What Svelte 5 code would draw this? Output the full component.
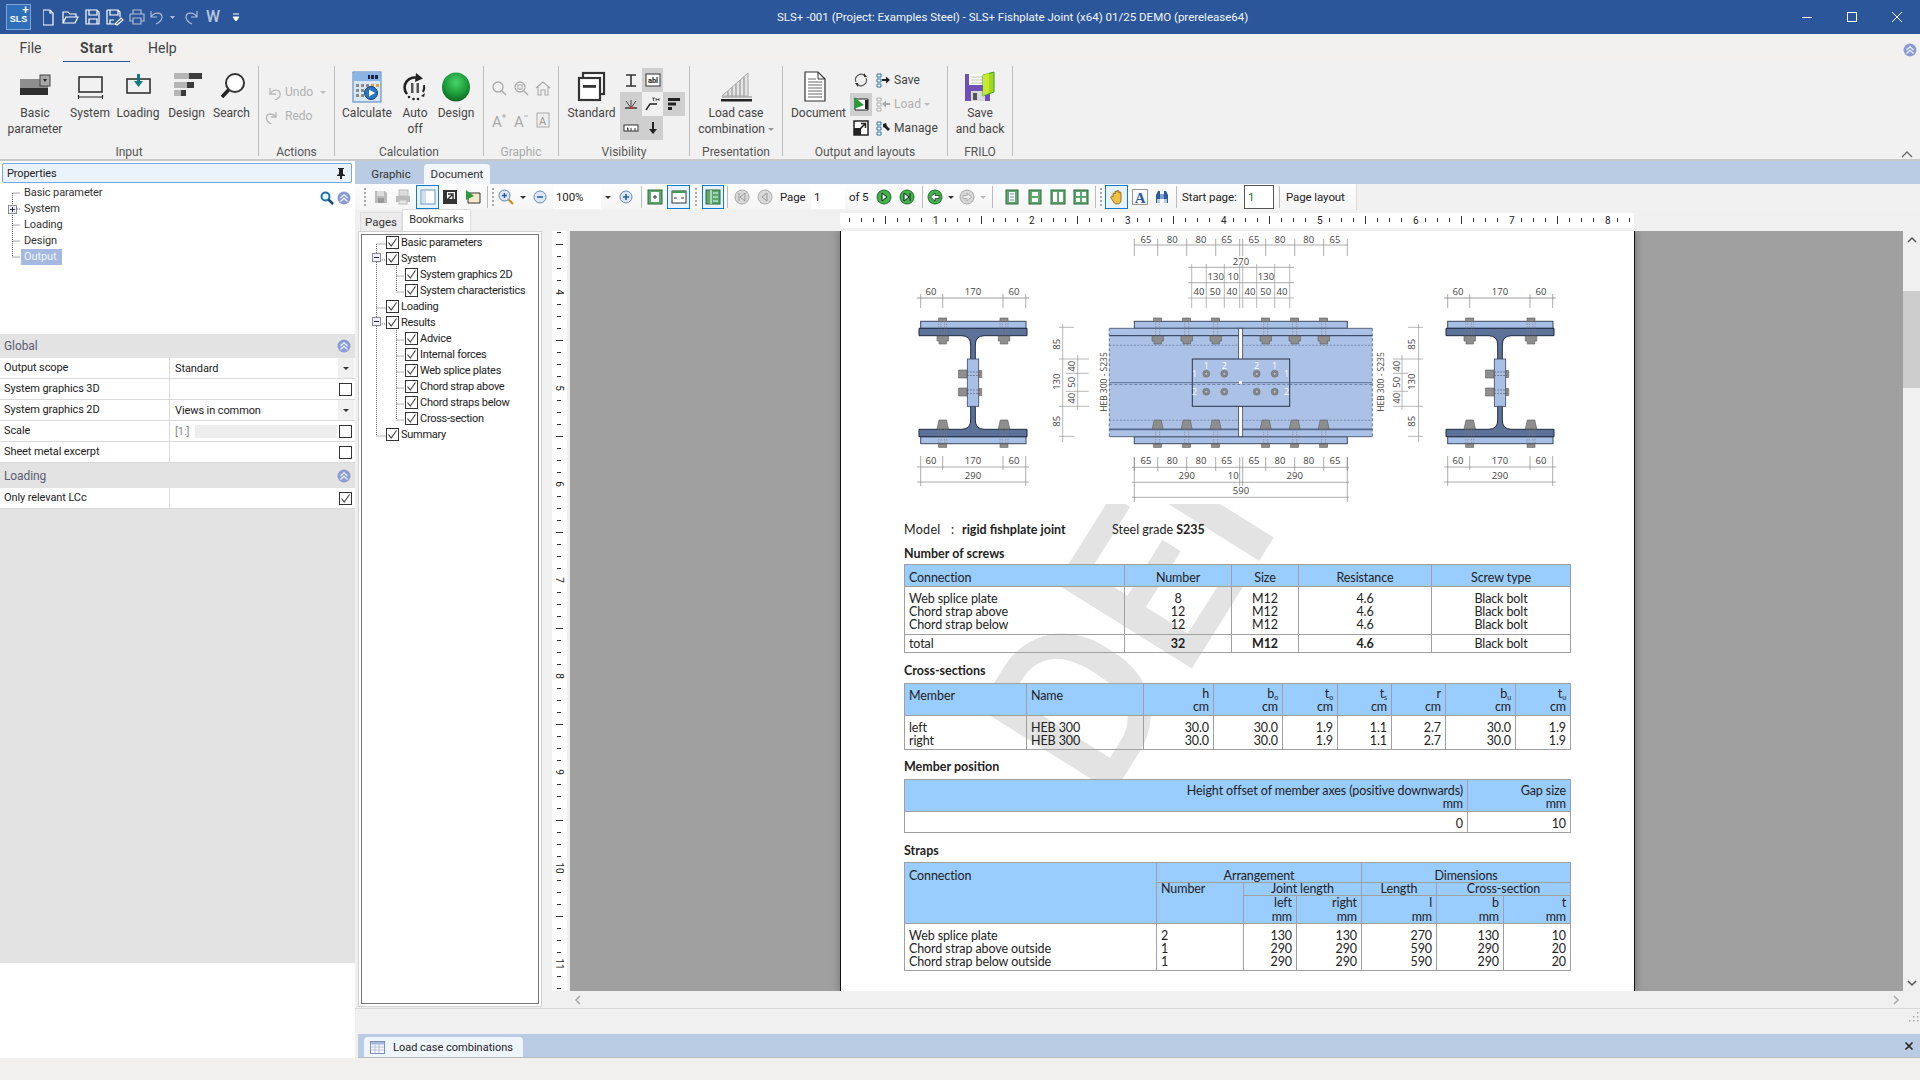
<script>
	const ic = {
		basic: '<rect x="1" y="8" width="28" height="9" fill="#8e8e8e"/><rect x="1" y="17" width="28" height="7" fill="#2e2e2e"/><rect x="21" y="4" width="10" height="11" fill="#a8a8a8" stroke="#444"/><path d="M24 8h4l-2 3z" fill="#222"/>',
		system: '<rect x="5" y="6" width="23" height="15" fill="none" stroke="#333" stroke-width="1.6"/><path d="M4 26h25M4.500 24v4M28.500 24v4" stroke="#222" stroke-width="1.2"/>',
		loading: '<rect x="5" y="8" width="23" height="14" fill="none" stroke="#333" stroke-width="1.6"/><path d="M15 3h3v7h3l-4.500 6-4.500-6h3z" fill="#117a80"/>',
		design: '<rect x="3" y="2" width="28" height="6" fill="#3c3c3c"/><rect x="3" y="2" width="15" height="6" fill="#b5b5b5"/><rect x="3" y="11" width="20" height="6" fill="#3c3c3c"/><rect x="3" y="11" width="13" height="6" fill="#b5b5b5"/><rect x="3" y="19" width="12" height="6" fill="#3c3c3c"/><rect x="3" y="19" width="7" height="6" fill="#b5b5b5"/>',
		search: '<circle cx="19" cy="12" r="9" fill="#fff" stroke="#333" stroke-width="2"/><path d="M12.500 19 6 26" stroke="#222" stroke-width="3.500"/>',
		calc: '<rect x="2" y="1" width="28" height="30" fill="#d8e6f6" stroke="#4d80c0"/><rect x="3" y="2" width="26" height="8" fill="#8ab4e6"/><g fill="#224"><rect x="17" y="4" width="2" height="4"/><rect x="20" y="4" width="3" height="4"/><rect x="24" y="4" width="3" height="4"/></g><g fill="#8a8a8a"><rect x="5" y="13" width="3" height="3"/><rect x="10" y="13" width="3" height="3"/><rect x="15" y="13" width="3" height="3"/><rect x="5" y="18" width="3" height="3"/><rect x="10" y="18" width="3" height="3"/><rect x="5" y="23" width="3" height="3"/><rect x="10" y="23" width="3" height="3"/></g><g fill="#e0a040"><rect x="20" y="13" width="3" height="3"/><rect x="25" y="13" width="3" height="3"/></g><circle cx="20" cy="22" r="6.500" fill="#2a76c0" stroke="#0d3f7c"/><path d="M18 18.500 24 22l-6 3.500z" fill="#fff"/>',
		auto: '<path d="M8 23A10 10 0 0 1 20 7.500" fill="none" stroke="#222" stroke-width="2.600"/><path d="M17 2l7 5.500-8 3.500z" fill="#222"/><path d="M25 14a10 10 0 0 1-1 7" fill="none" stroke="#222" stroke-width="2"/><rect x="12" y="12" width="2.500" height="10" fill="#555"/><rect x="17.500" y="12" width="2.500" height="10" fill="#555"/><g fill="#222"><circle cx="10" cy="26" r="1.300"/><circle cx="14.500" cy="28" r="1.300"/><circle cx="19" cy="28" r="1.300"/><path d="M22 25l4-3-1 4z"/></g>',
		sphere: '<ellipse cx="16" cy="16" rx="14" ry="14.500" fill="url(#sph)"/>',
		standard: '<rect x="7" y="2" width="21" height="21" fill="#fff" stroke="#333" stroke-width="2.200"/><rect x="3" y="7" width="21" height="22" fill="#fff" stroke="#333" stroke-width="2.200"/><rect x="7" y="14" width="13" height="2.800" fill="#333"/>',
		loadcase: '<path d="M2 25 28 2v23z" fill="#e4e4e4" stroke="#aaa"/><path d="M8 20v6M12 16v10M16 13v13M20 9v17M24 6v20" stroke="#999" stroke-width="1.200"/><path d="M2 26h30" stroke="#aaa" stroke-width="1.500"/><rect x="1" y="28" width="31" height="2.500" fill="#222"/>',
		doc: '<path d="M2 1h13l7 7v22H2z" fill="#fff" stroke="#333" stroke-width="1.200"/><path d="M15 1v7h7" fill="none" stroke="#333"/><path d="M5 8h8M5 11h14M5 14h14M5 17h14M5 20h14M5 23h14M5 26h14" stroke="#666"/>',
		saveback: '<path d="M1 3h22l3 3v24H1z" fill="#6f4fb8"/><rect x="5" y="3" width="16" height="11" fill="#fff"/><path d="M7 6h12M7 9h12M7 12h12" stroke="#bbb"/><rect x="7" y="20" width="14" height="10" fill="#d8d8d8"/><rect x="9" y="22" width="4" height="7" fill="#555"/><path d="M19 4l11-3v20l-11 4z" fill="#9fd81e" stroke="#3a9b22"/><path d="M19 4l6-2v20l-6 3z" fill="#c4ea30"/>',
		undo: '<path d="M5 4v6h6" fill="none" stroke="#b8b8b8" stroke-width="1.300"/><path d="M5 10c3-5 9-5 10-1 1 3-2 6-5 7" fill="none" stroke="#b8b8b8" stroke-width="1.300"/>',
		redo: '<path d="M11 4v5H6" fill="none" stroke="#b8b8b8" stroke-width="1.300"/><path d="M11 9C8 5 2 5 1.500 9c-.5 3 2 6 5 7" fill="none" stroke="#b8b8b8" stroke-width="1.300"/>',
		gzoom: '<circle cx="7" cy="7" r="5" fill="none" stroke="#aaa" stroke-width="1.300"/><path d="M11 11l4 4" stroke="#aaa" stroke-width="1.500"/>',
		gzoom2: '<circle cx="7" cy="7" r="5" fill="none" stroke="#aaa" stroke-width="1.300"/><rect x="5" y="5" width="4" height="4" fill="none" stroke="#aaa"/><path d="M11 11l4 4" stroke="#aaa" stroke-width="1.500"/>',
		ghome: '<path d="M1 8l7-6 7 6M3 7v8h3v-5h4v5h3V7" fill="none" stroke="#aaa" stroke-width="1.100"/>',
		ga1: '<text x="1" y="15" font-size="15" font-family="Roboto" fill="#aaa">A</text><path d="M11 4h4M13 2v4" stroke="#aaa"/>',
		ga2: '<text x="1" y="15" font-size="15" font-family="Roboto" fill="#aaa">A</text><path d="M11 4h4" stroke="#aaa"/>',
		ga3: '<rect x="2" y="1" width="12" height="14" fill="#eee" stroke="#aaa"/><text x="4" y="13" font-size="11" font-family="Roboto" fill="#999">A</text>',
		vI: '<path d="M3 3h10M3 14h10M8 3v11" stroke="#333" stroke-width="1.600"/>',
		vabl: '<rect x="1" y="2" width="14" height="12" fill="#fff" stroke="#333"/><text x="8" y="11" text-anchor="middle" font-size="7.500" font-weight="700" font-family="Roboto" fill="#222">abl</text>',
		vaxes: '<path d="M2 12h12" stroke="#333" stroke-width="1.400"/><path d="M8 12 3 5M8 12l5-7M8 12V4" stroke="#444"/><rect x="7" y="10.500" width="2.500" height="2.500" fill="#c33"/>',
		vth: '<path d="M1 14l4-6h7" fill="none" stroke="#222" stroke-width="1.400"/><path d="M7 2h3M8.500 2v3M11 2v3M14 2v3M11 3.500h3" stroke="#222" stroke-width=".7"/>',
		vbars: '<rect x="2" y="2" width="12" height="3" fill="#222"/><rect x="2" y="6.500" width="8" height="3" fill="#222"/><rect x="2" y="11" width="4" height="3" fill="#222"/>',
		vdim: '<rect x="1" y="5" width="14" height="6" fill="#fff" stroke="#333"/><path d="M4 8h1v3M8 8v3M12 8v3" stroke="#333"/>',
		varrow: '<path d="M8 2v8" stroke="#222" stroke-width="2"/><path d="M4 9h8l-4 5z" fill="#222"/>',
		orefresh: '<path d="M3 10a5.500 5.500 0 0 1 9-6M13 6a5.500 5.500 0 0 1-9 6" fill="none" stroke="#555" stroke-width="1.100"/><path d="M11 1v4h3zM5 15v-4H2z" fill="#333"/>',
		osave: '<path d="M2 2h4v3H2zM2 7h4v3H2zM2 12h4v3H2z" fill="#fff" stroke="#2b6ea8"/><path d="M7 8h5" stroke="#222" stroke-width="2"/><path d="M11 4.500 15 8l-4 3.500z" fill="#222"/>',
		oload: '<path d="M2 2h4v3H2zM2 7h4v3H2zM2 12h4v3H2z" fill="#fff" stroke="#aaa"/><path d="M10 8h5" stroke="#aaa" stroke-width="2"/><path d="M11 4.500 7 8l4 3.500z" fill="#aaa"/>',
		ofilm: '<path d="M2 3h13v11H2z" fill="#fff" stroke="#222"/><path d="M1 1v12l10-4z" fill="#2b9a3b"/><rect x="12" y="4" width="3" height="9" fill="#222"/>',
		oexpand: '<rect x="1" y="1" width="14" height="14" fill="#fff" stroke="#222" stroke-width="1.500"/><path d="M1 8h7v7H1z" fill="#222"/><path d="M7 9l5-5M8 3.500h4.500V8" fill="none" stroke="#222" stroke-width="1.500"/>',
		omanage: '<path d="M2 2h4v3H2zM2 7h4v3H2zM2 12h4v3H2z" fill="#fff" stroke="#2b6ea8"/><path d="M8 4l3-1 1 3 3 3-2 2-3-3-2-1z" fill="#222"/>',
		tSave: '<path d="M2 2h10l2 2v10H2z" fill="#bbb"/><rect x="4" y="2" width="7" height="5" fill="#ddd"/><rect x="5" y="9" width="6" height="5" fill="#999"/>',
		tPrint: '<rect x="4" y="1" width="9" height="6" fill="#ddd" stroke="#bbb"/><path d="M1 7h14v6H1z" fill="#bbb"/><rect x="4" y="11" width="8" height="4" fill="#e4e4e4" stroke="#bbb"/>',
		tPanel: '<rect x="1" y="1" width="14" height="14" fill="#fff" stroke="#6a8fc0"/><rect x="2" y="2" width="4" height="12" fill="#cfe0f5"/>',
		tExport: '<rect x="1" y="1" width="14" height="14" fill="#333"/><rect x="5" y="3" width="8" height="7" fill="#fff"/><path d="M3 13l7-7M6 5h5v5" fill="none" stroke="#333" stroke-width="1.500"/>',
		tFilm: '<path d="M3 4h12v10H3z" fill="#f6e9cc" stroke="#333"/><path d="M1 1v10l8-4z" fill="#2b9a3b"/>',
		tZoomIn: '<circle cx="6.500" cy="6.500" r="5.500" fill="#dbe7f7" stroke="#5880b0"/><path d="M4 6.500h5M6.500 4v5" stroke="#255da0" stroke-width="1.400"/><path d="M10.500 10.500 15 15" stroke="#c09020" stroke-width="2.200"/>',
		tMinus: '<circle cx="8" cy="8" r="6" fill="#dbe7f7" stroke="#6a8ab0"/><path d="M5 8h6" stroke="#255da0" stroke-width="1.500"/>',
		tPlus: '<circle cx="8" cy="8" r="6" fill="#dbe7f7" stroke="#6a8ab0"/><path d="M5 8h6M8 5v6" stroke="#255da0" stroke-width="1.500"/>',
		tFit: '<rect x="1" y="1" width="14" height="14" fill="#5ea86e" stroke="#2c6a3c"/><rect x="4" y="3" width="8" height="10" fill="#fff"/><path d="M6 8h4M8 6v4" stroke="#333"/>',
		tWidth: '<rect x="1" y="2" width="14" height="12" fill="#fff" stroke="#333"/><rect x="1" y="2" width="14" height="2" fill="#3f9a55"/><path d="M3 9h3M10 9h3" stroke="#333"/>',
		tBook: '<rect x="1" y="1" width="14" height="14" fill="#5ea86e" stroke="#2c6a3c"/><path d="M6 1v14" stroke="#fff"/><path d="M8 4h5M8 8h5M8 12h5" stroke="#dff"/>',
		pFirst: '<circle cx="8" cy="8" r="7" fill="#d8d8d8" stroke="#aaa"/><path d="M5 4v8M11 4l-5 4 5 4z" fill="none" stroke="#999"/>',
		pPrev: '<circle cx="8" cy="8" r="7" fill="#d8d8d8" stroke="#aaa"/><path d="M10 4 5 8l5 4z" fill="none" stroke="#999"/>',
		pNext: '<circle cx="8" cy="8" r="7" fill="#43b04a" stroke="#1d6f2c"/><path d="M6 4l5 4-5 4z" fill="#d9f4d0" stroke="#123"/>',
		pLast: '<circle cx="8" cy="8" r="7" fill="#43b04a" stroke="#1d6f2c"/><path d="M5 4l5 4-5 4zM11 4v8" fill="#d9f4d0" stroke="#123"/>',
		pBack: '<circle cx="8" cy="8" r="7" fill="#43b04a" stroke="#1d6f2c"/><path d="M3.500 8 8 4v2.500h4v3H8V12z" fill="#fff" stroke="#123" stroke-width=".7"/>',
		pFwd: '<circle cx="8" cy="8" r="7" fill="#d8d8d8" stroke="#aaa"/><path d="M12.500 8 8 4v2.500H4v3h4V12z" fill="#eee" stroke="#aaa"/>',
		l1: '<rect x="2" y="1" width="12" height="14" fill="#5ea86e" stroke="#2c6a3c"/><rect x="5" y="3" width="6" height="10" fill="#fff"/><path d="M6 5h4M6 8h4M6 11h4" stroke="#68a"/>',
		l2: '<rect x="2" y="1" width="12" height="14" fill="#5ea86e" stroke="#2c6a3c"/><rect x="5" y="3" width="6" height="4" fill="#fff"/><rect x="5" y="9" width="6" height="4" fill="#fff"/>',
		l3: '<rect x="1" y="1" width="14" height="14" fill="#5ea86e" stroke="#2c6a3c"/><rect x="3" y="3" width="4" height="10" fill="#fff"/><rect x="9" y="3" width="4" height="10" fill="#fff"/>',
		l4: '<rect x="1" y="1" width="14" height="14" fill="#5ea86e" stroke="#2c6a3c"/><rect x="3" y="3" width="4" height="4" fill="#fff"/><rect x="9" y="3" width="4" height="4" fill="#fff"/><rect x="3" y="9" width="4" height="4" fill="#fff"/><rect x="9" y="9" width="4" height="4" fill="#fff"/>',
		tHand: '<path d="M4 8V5c0-1.500 2-1.500 2 0V3c0-1.500 2-1.500 2 0v-.5c0-1.500 2-1.500 2 0V4c0-1.500 2-1.500 2 0v7c0 3-2 4-4 4s-3-1-4-3L2 9c-1-1.500 1-2.500 2-1z" fill="#f0c040" stroke="#80581a" stroke-width=".8"/>',
		tA: '<rect x=".5" y=".5" width="15" height="15" fill="none" stroke="#333" stroke-dasharray="1 1"/><text x="8" y="14" text-anchor="middle" font-size="15" font-family="Liberation Serif" fill="#2b5c9a" font-weight="700">A</text>',
		tBin: '<path d="M2 14V6l2-4h2v12zM10 14V2h2l2 4v8z" fill="#2b5c9a"/><rect x="6" y="5" width="4" height="5" fill="#79a0d0"/><rect x="3" y="10" width="3" height="4" fill="#bcd"/><rect x="10" y="10" width="3" height="4" fill="#bcd"/>'
	};

	const inputBtns = [
		{ w: 70, n: 'basic', s: 32, t: ['Basic', 'parameter'] },
		{ w: 40, n: 'system', s: 32, t: ['System'] },
		{ w: 56, n: 'loading', s: 32, t: ['Loading'] },
		{ w: 41, n: 'design', s: 32, t: ['Design'] },
		{ w: 49, n: 'search', s: 32, t: ['Search'] }
	];
	const calcBtns = [
		{ w: 64, n: 'calc', s: 32, t: ['Calculate'] },
		{ w: 32, n: 'auto', s: 32, t: ['Auto', 'off'] },
		{ w: 50, n: 'sphere', s: 32, t: ['Design'] }
	];
	const graphic = ['gzoom', 'gzoom2', 'ghome', 'ga1', 'ga2', 'ga3'];
	const visGrid = [
		{ n: 'vI' }, { n: 'vabl', on: true }, {},
		{ n: 'vaxes', on: true }, { n: 'vth' }, { n: 'vbars', on: true },
		{ n: 'vdim', on: true }, { n: 'varrow', on: true }, {}
	];
	const outRows = [
		{ a: 'orefresh', b: 'osave', t: 'Save' },
		{ a: 'ofilm', b: 'oload', t: 'Load', off: true, on: true },
		{ a: 'oexpand', b: 'omanage', t: 'Manage' }
	];

	const tools = [
		{ k: 'grip', w: 10 }, { k: 'ic', w: 22, n: 'tSave' }, { k: 'ic', w: 22, n: 'tPrint' }, { k: 'sp', w: 2 },
		{ k: 'ic', w: 23, n: 'tPanel', sel: true }, { k: 'ic', w: 22, n: 'tExport' }, { k: 'ic', w: 23, n: 'tFilm' },
		{ k: 'sep', w: 6 }, { k: 'grip', w: 6 }, { k: 'ic', w: 20, n: 'tZoomIn' }, { k: 'drop', w: 14 }, { k: 'ic', w: 20, n: 'tMinus' },
		{ k: 'sp', w: 3 }, { k: 'inp', w: 48, t: '100%' }, { k: 'drop', w: 14 }, { k: 'ic', w: 22, n: 'tPlus' },
		{ k: 'sep', w: 8 }, { k: 'ic', w: 20, n: 'tFit' }, { k: 'sp', w: 2 }, { k: 'ic', w: 23, n: 'tWidth', sel: true },
		{ k: 'grip', w: 12 }, { k: 'ic', w: 22, n: 'tBook', sel: true }, { k: 'sep', w: 7 },
		{ k: 'ic', w: 22, n: 'pFirst' }, { k: 'ic', w: 24, n: 'pPrev' }, { k: 'sp', w: 3 }, { k: 'txt', w: 31, t: 'Page' },
		{ k: 'inp', w: 34, t: '1' }, { k: 'sp', w: 4 }, { k: 'txt', w: 21, t: 'of 5' }, { k: 'sp', w: 3 },
		{ k: 'ic', w: 22, n: 'pNext' }, { k: 'sp', w: 1 }, { k: 'ic', w: 22, n: 'pLast' }, { k: 'sep', w: 8 },
		{ k: 'ic', w: 18, n: 'pBack' }, { k: 'drop', w: 14 }, { k: 'ic', w: 18, n: 'pFwd' }, { k: 'drop', w: 14, off: true }, { k: 'sep', w: 4 }, { k: 'sp', w: 6 },
		{ k: 'ic', w: 23, n: 'l1' }, { k: 'ic', w: 23, n: 'l2' }, { k: 'ic', w: 24, n: 'l3' }, { k: 'ic', w: 22, n: 'l4' },
		{ k: 'sep', w: 6 }, { k: 'grip', w: 6 }, { k: 'sp', w: 1 }, { k: 'ic', w: 23, n: 'tHand', sel: true },
		{ k: 'ic', w: 23, n: 'tA' }, { k: 'ic', w: 22, n: 'tBin' }, { k: 'sep', w: 7 }, { k: 'sp', w: 2 },
		{ k: 'txt', w: 58, t: 'Start page:' }, { k: 'sp', w: 4 }, { k: 'box', w: 30, t: '1' }, { k: 'sep', w: 10 }, { k: 'sp', w: 2 },
		{ k: 'txt', w: 62, t: 'Page layout' }
	];

	const propTree = ['Basic parameter', 'System', 'Loading', 'Design', 'Output'];
	const globalRows = [
		{ l: 'Output scope', v: 'Standard', dd: true },
		{ l: 'System graphics 3D', cb: 'off' },
		{ l: 'System graphics 2D', v: 'Views in common', dd: true },
		{ l: 'Scale', v: '[1:]', scale: true, cb: 'off' },
		{ l: 'Sheet metal excerpt', cb: 'off' }
	];

	const marks = [
		['Basic parameters', 1], ['System', 1, 'm'], ['System graphics 2D', 2], ['System characteristics', 2], ['Loading', 1],
		['Results', 1, 'm'], ['Advice', 2], ['Internal forces', 2], ['Web splice plates', 2], ['Chord strap above', 2],
		['Chord straps below', 2], ['Cross-section', 2], ['Summary', 1]
	];

	const hTicks = Array.from({ length: 67 }, (_, i) => i);
	const vTicks = Array.from({ length: 64 }, (_, i) => i);

	const t1cols = [220, 107, 67, 133, 139];
	const t1rows = [
		['Web splice plate', '8', 'M12', '4.6', 'Black bolt'],
		['Chord strap above', '12', 'M12', '4.6', 'Black bolt'],
		['Chord strap below', '12', 'M12', '4.6', 'Black bolt']
	];
	const t2cols = [122, 117, 70, 69, 55, 54, 54, 70, 55];
	const t2rows = [
		['left', 'HEB 300', '30.0', '30.0', '1.9', '1.1', '2.7', '30.0', '1.9'],
		['right', 'HEB 300', '30.0', '30.0', '1.9', '1.1', '2.7', '30.0', '1.9']
	];
	const t4cols = [252, 87, 53, 65, 75, 67, 67];
	const t4rows = [
		['Web splice plate', '2', '130', '130', '270', '130', '10'],
		['Chord strap above outside', '1', '290', '290', '590', '290', '20'],
		['Chord strap below outside', '1', '290', '290', '590', '290', '20']
	];

	// diagram data, all in screen pixels of the reference
	const flangeBolts = [1157.7, 1186.7, 1215.7, 1265.7, 1294.7, 1323.7];
	const webBolts = [1206.3, 1224.3, 1256.7, 1274.7];
	const topA = [[65, 1146], [80, 1172.3], [80, 1201], [65, 1226.7], [65, 1254], [80, 1280], [80, 1308.7], [65, 1335]];
	const ticksA = [1134.3, 1157.7, 1186.7, 1215.7, 1239.7, 1242.7, 1265.7, 1294.7, 1323.7, 1347.3];
	const ticksC = [1191.7, 1206.3, 1224.3, 1239.7, 1242.7, 1256.7, 1274.7, 1289.7];
	const topC = [[40, 1199], [50, 1215.3], [40, 1232], [40, 1250], [50, 1265.7], [40, 1282]];
	const rotL = [[85, 345.3], [130, 382.7], [85, 422.3]];
	const rotS = [[40, 367.3], [50, 383.3], [40, 399.3]];
</script>

{#snippet svgIcon(name, size)}
	<svg class="icon" width={size} height={size} viewBox={size === 32 ? '0 0 32 32' : '0 0 16 16'}>{@html ic[name]}</svg>
{/snippet}

{#snippet bigBtn(b)}
	<div class="big" style:width="{b.w}px">
		<div class="big-ic">{@render svgIcon(b.n, b.s)}</div>
		{#each b.t as line}<span>{line}</span>{/each}
	</div>
{/snippet}

{#snippet circleUp()}
	<svg width="14" height="14" viewBox="0 0 14 14"><circle cx="7" cy="7" r="6.500" fill="#8d9bd3"/><path d="M3.500 7 7 3.800 10.500 7M3.500 10.500 7 7.300l3.500 3.200" fill="none" stroke="#eaf4ff" stroke-width="1.300"/></svg>
{/snippet}

{#snippet check(on)}
	<svg width="13" height="13" viewBox="0 0 13 13"><rect x=".5" y=".5" width="12" height="12" fill="#fff" stroke="#333"/>{#if on}<path d="M2.500 6.500 5.200 10 10.500 2.500" fill="none" stroke="#444" stroke-width="1.100"/>{/if}</svg>
{/snippet}

<div class="app">
	<header class="titlebar">
		<div class="logo">SLS<i>+</i></div>
		<div class="quick">
			<svg width="190" height="20" viewBox="0 0 190 20" fill="none" stroke="#fff" stroke-width="1.200">
				<path d="M0 3h7l3 3v12H0zM7 3v3h3" />
				<path d="M20 16V5h5l2 2h6v3M20 16l3-6h12l-3 6z" />
				<path d="M43 3h11l2 2v12H43zM46 3v5h8V3M46 17v-5h8v5" />
				<path d="M64 3h11l2 2v5M64 3v14h7M67 3v5h8V3M67 17v-4h4M72 17l6-6 2 2-6 5z" />
				<path d="M90 7V3h8v4M87 7h14v7h-3M90 14h-3V7M90 11h8v6h-8z" stroke="#aebbd6" />
				<path d="M108 4v6h6M108 10c3-5 10-5 11-1 1 3-3 7-6 8" stroke="#aebbd6" />
				<path d="M127 9h5l-2.500 3z" fill="#aebbd6" stroke="none" />
				<path d="M154 4v6h-6M154 10c-3-5-10-5-11-1-1 3 3 7 6 8" stroke="#aebbd6" />
			</svg>
			<span class="w">W</span>
			<svg class="custom" width="8" height="10" viewBox="0 0 8 10"><path d="M1 2h6M1 5h6l-3 4z" fill="#fff" stroke="#fff" /></svg>
		</div>
		<div class="title">SLS+ -001 (Project: Examples Steel) - SLS+ Fishplate Joint (x64) 01/25 DEMO (prerelease64)</div>
		<div class="winctl">
			<svg width="14" height="14" viewBox="0 0 14 14"><path d="M2 7.500h10" stroke="#fff" /></svg>
			<svg width="14" height="14" viewBox="0 0 14 14"><rect x="2.500" y="2.500" width="9" height="9" fill="none" stroke="#fff" /></svg>
			<svg width="14" height="14" viewBox="0 0 14 14"><path d="M2 2l10 10M12 2 2 12" stroke="#fff" /></svg>
		</div>
	</header>

	<nav class="rtabs">
		<span class="rtab file">File</span>
		<span class="rtab start">Start</span>
		<span class="rtab help">Help</span>
		<div class="help-ic">{@render circleUp()}</div>
	</nav>

	<section class="ribbon">
		<svg width="0" height="0" class="defs"><defs><radialGradient id="sph" cx=".5" cy=".35" r=".7"><stop offset="0" stop-color="#4bd36a"/><stop offset=".6" stop-color="#1b9a3a"/><stop offset="1" stop-color="#0a5a1f"/></radialGradient></defs></svg>
		<div class="group g-input">
			<div class="gbody">{#each inputBtns as b}{@render bigBtn(b)}{/each}</div>
			<div class="glabel">Input</div>
		</div>
		<div class="group g-actions">
			<div class="gbody col">
				<div class="srow off"><svg width="16" height="16" viewBox="0 0 16 16">{@html ic.undo}</svg><span>Undo</span><b class="caret"></b></div>
				<div class="srow off"><svg width="16" height="16" viewBox="0 0 16 16">{@html ic.redo}</svg><span>Redo</span></div>
			</div>
			<div class="glabel">Actions</div>
		</div>
		<div class="group g-calc">
			<div class="gbody">{#each calcBtns as b}{@render bigBtn(b)}{/each}</div>
			<div class="glabel">Calculation</div>
		</div>
		<div class="group g-graphic">
			<div class="gbody gridg">{#each graphic as g}<div class="cell">{@render svgIcon(g, 16)}</div>{/each}</div>
			<div class="glabel off">Graphic</div>
		</div>
		<div class="group g-vis">
			<div class="gbody">
				{@render bigBtn({ w: 65, n: 'standard', s: 32, t: ['Standard'] })}
				<div class="visgrid">
					{#each visGrid as v}
						<div class="vcell" class:on={v.on}>{#if v.n}{@render svgIcon(v.n, 16)}{/if}</div>
					{/each}
				</div>
			</div>
			<div class="glabel">Visibility</div>
		</div>
		<div class="group g-pres">
			<div class="gbody">
				<div class="big wide">
					<div class="big-ic">{@render svgIcon('loadcase', 32)}</div>
					<span>Load case</span><span>combination <b class="caret"></b></span>
				</div>
			</div>
			<div class="glabel">Presentation</div>
		</div>
		<div class="group g-out">
			<div class="gbody">
				{@render bigBtn({ w: 71, n: 'doc', s: 32, t: ['Document'] })}
				<div class="outrows">
					{#each outRows as r}
						<div class="orow" class:off={r.off}>
							<div class="oa" class:on={r.on}>{@render svgIcon(r.a, 16)}</div>
							{@render svgIcon(r.b, 16)}
							<span>{r.t}</span>{#if r.off}<b class="caret"></b>{/if}
						</div>
					{/each}
				</div>
			</div>
			<div class="glabel">Output and layouts</div>
		</div>
		<div class="group g-frilo">
			<div class="gbody">{@render bigBtn({ w: 64, n: 'saveback', s: 32, t: ['Save', 'and back'] })}</div>
			<div class="glabel">FRILO</div>
		</div>
		<svg class="collapse" width="12" height="8" viewBox="0 0 12 8"><path d="M1 7l5-5 5 5" fill="none" stroke="#666" stroke-width="1.300"/></svg>
	</section>

	<main class="main">
		<aside class="left">
			<div class="props"><span>Properties</span>
				<svg width="10" height="12" viewBox="0 0 10 12"><path d="M2 1h6v1H7v5l2 1v1H6v3H4V9H1V8l2-1V2H2z" fill="#222"/></svg>
			</div>
			<div class="ptree">
				<svg class="plines" width="24" height="80" viewBox="0 0 24 80" fill="none" stroke="#555" stroke-dasharray="1 1"><path d="M12.500 9v64M12.500 9h8M17 25h4M12.500 41h8M12.500 57h8M12.500 73h8"/></svg>
				<svg class="pplus" width="9" height="9" viewBox="0 0 9 9"><rect x=".5" y=".5" width="8" height="8" fill="#eef" stroke="#888"/><path d="M2 4.500h5M4.500 2v5" stroke="#224"/></svg>
				{#each propTree as p, i}
					<div class="pnode" class:sel={i === 4}>{p}</div>
				{/each}
				<div class="ptools">
					<svg width="14" height="14" viewBox="0 0 14 14"><circle cx="5.500" cy="5.500" r="4" fill="#dff" stroke="#1f6fb0" stroke-width="2"/><path d="M8.500 8.500 13 13" stroke="#174a7c" stroke-width="2.500"/></svg>
					{@render circleUp()}
				</div>
			</div>
			<div class="sect"><span>Global</span>{@render circleUp()}</div>
			{#each globalRows as r}
				<div class="prow">
					<div class="pl">{r.l}</div>
					<div class="pv" class:grayt={r.scale}>
						<span>{r.v ?? ''}</span>
						{#if r.scale}<div class="scalebox"></div>{/if}
						{#if r.dd}<div class="dd"><b class="caret dark"></b></div>{/if}
						{#if r.cb}<div class="cb">{@render check(false)}</div>{/if}
					</div>
				</div>
			{/each}
			<div class="sect tall"><span>Loading</span>{@render circleUp()}</div>
			<div class="prow">
				<div class="pl">Only relevant LCc</div>
				<div class="pv"><span></span><div class="cb">{@render check(true)}</div></div>
			</div>
			<div class="filler"></div>
		</aside>

		<div class="right">
			<div class="dtabs">
				<span class="dtab">Graphic</span>
				<span class="dtab act">Document</span>
			</div>
			<div class="toolrow">
				<div class="toolbar">
					{#each tools as t}
						<div class="tool {t.k}" class:sel={t.sel} style:width="{t.w}px">
							{#if t.k === 'ic'}{@render svgIcon(t.n, 16)}{/if}
							{#if t.k === 'txt' || t.k === 'inp' || t.k === 'box'}{t.t}{/if}
							{#if t.k === 'drop'}<b class="caret dark" class:light={t.off}></b>{/if}
						</div>
					{/each}
				</div>
			</div>
			<div class="work">
				<div class="marks">
					<div class="subtabs">
						<span class="stab">Pages</span>
						<span class="stab act">Bookmarks</span>
					</div>
					<div class="mframe">
						<div class="mtree">
							<svg class="mlines" width="60" height="210" viewBox="0 0 60 210" fill="none" stroke="#666" stroke-dasharray="1 1">
								<path d="M14.500 11v192M14.500 11h10M18 27h6M34.500 27v32M34.500 43h8M34.500 59h8M14.500 75h10M18 91h6M34.500 91v96M34.500 107h8M34.500 123h8M34.500 139h8M34.500 155h8M34.500 171h8M34.500 187h8M14.500 203h10"/>
							</svg>
							{#each marks as m}
								<div class="mrow" class:l2={m[1] === 2}>
									{#if m[2]}<svg class="minus" width="9" height="9" viewBox="0 0 9 9"><rect x=".5" y=".5" width="8" height="8" fill="#eef" stroke="#888"/><path d="M2 4.500h5" stroke="#224"/></svg>{/if}
									{@render check(true)}<span>{m[0]}</span>
								</div>
							{/each}
						</div>
					</div>
				</div>

				<div class="docview">
					<div class="hruler">
						<svg width="794" height="15" viewBox="0 0 794 15">
							{#each hTicks as i}
								{#if i % 8 === 0 && i > 0}
									<text x={i * 12 - 3} y="11" font-size="10" font-family="Roboto" fill="#222">{i / 8}</text>
								{:else}
									<path d="M{i * 12 - 2.500} {i % 4 === 0 ? 3 : 5}v{i % 4 === 0 ? 8 : 4}" stroke="#333"/>
								{/if}
							{/each}
						</svg>
					</div>
					<div class="docrow">
						<div class="vruler">
							<svg width="15" height="760" viewBox="0 0 15 760">
								{#each vTicks as i}
									{#if (i - 5) % 8 === 0 && i > 4}
										<text transform="translate(4 {i * 12 + 1}) rotate(90)" text-anchor="middle" font-size="10" font-family="Roboto" fill="#222">{(i - 5) / 8 + 4}</text>
									{:else}
										<path d="M{(i - 5) % 4 === 0 ? 4 : 5} {i * 12 + 1.500}h{(i - 5) % 4 === 0 ? 7 : 4}" stroke="#333"/>
									{/if}
								{/each}
							</svg>
						</div>
						<div class="viewer">
							<div class="page">
								<div class="stamp">DEMO</div>
								<svg class="drawing" width="794" height="273" viewBox="841 232 794 273" font-family="Open Sans, sans-serif" font-size="9.500" fill="#444">
									<defs>
										<g id="isec">
											<rect x="920.700" y="322.300" width="105.300" height="7" fill="#a9c0e6" stroke="#3a4660"/>
											<rect x="920.700" y="437.700" width="105.300" height="7" fill="#a9c0e6" stroke="#3a4660"/>
											<path d="M919 329.300H1027V336.700H984Q975.300 337 975.300 346V421Q975.300 430 984 430.300H1027V437.700H919V430.300H962Q970.700 430 970.700 421V346Q970.700 337 962 336.700H919Z" fill="#5d7299" stroke="#1f2a40"/>
											<rect x="967.300" y="360" width="11.400" height="47.300" fill="#a9c0e6" stroke="#3a4660" stroke-width=".8"/>
											<g id="bolt" fill="#8e8e8e" stroke="#5c5c5c" stroke-width=".6">
												<rect x="938.700" y="319" width="8" height="3.300"/>
												<path d="M937 337h11.500v5h-2v3h-7.500v-3h-2z"/>
												<path d="M938.700 322v15M941 322v15M944.500 322v15M946.700 322v15" stroke="#7a7a8c" stroke-dasharray="1.500 1" fill="none"/>
												<path d="M939 421l-2 9h11.500l-2-9z"/>
												<rect x="938.700" y="445" width="8" height="3.300"/>
												<path d="M938.700 430v15M941 430v15M944.500 430v15M946.700 430v15" stroke="#7a7a8c" stroke-dasharray="1.500 1" fill="none"/>
											</g>
											<use href="#bolt" x="61.300"/>
											<g fill="#8e8e8e" stroke="#5c5c5c" stroke-width=".6">
												<path d="M958.500 371h8.500v8h-8.500zM978.700 371.500h3v7h-3z"/>
												<path d="M958.500 389h8.500v8h-8.500zM978.700 389.500h3v7h-3z"/>
											</g>
											<path d="M967 373h13M967 376.500h13M967 391h13M967 394.500h13" stroke="#556" stroke-width=".6" stroke-dasharray="2 1"/>
										</g>
										<g id="idims">
											<path d="M917 299h112" stroke="#bbb" stroke-width="1.300"/>
											<path d="M920.700 295v14M942.700 295v14M1003 295v14M1025.700 295v14M917 468h112M917 483h112M920.700 457v30M942.700 457v14M1003 457v14M1025.700 457v30" stroke="#888" stroke-width=".7"/>
											<text x="931" y="295.500" text-anchor="middle">60</text>
											<text x="973" y="295.500" text-anchor="middle">170</text>
											<text x="1014" y="295.500" text-anchor="middle">60</text>
											<text x="931" y="465" text-anchor="middle">60</text>
											<text x="973" y="465" text-anchor="middle">170</text>
											<text x="1014" y="465" text-anchor="middle">60</text>
											<text x="973" y="480" text-anchor="middle">290</text>
										</g>
									</defs>
									<use href="#isec"/><use href="#idims"/>
									<use href="#isec" x="527"/><use href="#idims" x="527"/>

									<!-- fishplate side view -->
									<rect x="1134.300" y="322.300" width="213" height="7" fill="#a9c0e6" stroke="#3a4660"/>
									<rect x="1134.300" y="437.700" width="213" height="7" fill="#a9c0e6" stroke="#3a4660"/>
									<rect x="1109.300" y="329.300" width="263" height="108.400" fill="#abc1e6"/>
									<path d="M1109.300 329.300h263M1109.300 437.700h263" stroke="#3a4660" stroke-width=".8"/>
									<path d="M1109.300 329.300v108.400M1372.300 329.300v108.400" stroke="#4a5a80" stroke-width=".8" stroke-dasharray="3 2"/>
									<path d="M1109.300 336.700h263" stroke="#26324c"/>
									<path d="M1109.300 430.300h263" stroke="#56688c" stroke-width="1.700"/>
									<path d="M1109.300 346.300h263M1109.300 421.300h263" stroke="#5a6a90" stroke-width=".6" stroke-dasharray="2 1.500"/>
									<path d="M1109.300 383.700h263" stroke="#4a5a80" stroke-width=".8"/>
									<path d="M1109.300 385.500h263" stroke="#4a5a80" stroke-width=".6" stroke-dasharray="3 2"/>
									<rect x="1238.700" y="329.300" width="4" height="108.400" fill="#fff" stroke="#26324c" stroke-width=".7"/>
									<rect x="1192.300" y="360" width="97.400" height="47.300" fill="#abc1e6" stroke="#26324c"/>
									<path d="M1192.300 383.700h97.400" stroke="#4a5a80" stroke-width=".8"/>
									<path d="M1192.300 385.500h97.400" stroke="#4a5a80" stroke-width=".6" stroke-dasharray="3 2"/>
									<rect x="1239" y="382" width="3" height="3" fill="#fff"/>
									{#each flangeBolts as x}
										<g fill="#8e8e8e" stroke="#5c5c5c" stroke-width=".6">
											<rect x={x - 4} y="319" width="8" height="3.300"/>
											<path d="M{x - 5.700} 337h11.500v5h-2v3h-7.500v-3h-2z"/>
											<path d="M{x - 3.500} 421l-2 9h11l-2-9z"/>
											<rect x={x - 4} y="445" width="8" height="3.300"/>
											<path d="M{x - 2} 322v15M{x + 2} 322v15M{x - 2} 430v15M{x + 2} 430v15" stroke="#7a7a8c" stroke-dasharray="1.500 1" fill="none"/>
										</g>
									{/each}
									{#each webBolts as x}
										{#each [374.7, 392.7] as y}
											<circle cx={x} cy={y} r="3.500" fill="#8a8a8a" stroke="#666" stroke-width=".5"/>
											<circle cx={x} cy={y} r="1.500" fill="#b5c5de" stroke="#444" stroke-width=".4"/>
										{/each}
									{/each}
									<g fill="#fff" font-size="9" text-anchor="middle">
										<text x="1206.300" y="370">1</text><text x="1224.300" y="370">2</text><text x="1256.700" y="370">2</text><text x="1274.700" y="370">1</text>
										<text x="1194.700" y="378">1</text><text x="1194.700" y="396">2</text><text x="1286.700" y="378">1</text><text x="1286.700" y="396">2</text>
									</g>

									<!-- dimensions -->
									<path d="M1134 246h214M1132 468.300h217M1132 483.300h217M1132 498.300h217" stroke="#888" stroke-width=".7"/>
									<path d="M1188 268.300h106M1188 283.700h106M1188 299h106" stroke="#bbb" stroke-width="1.200"/>
									{#each ticksA as x}<path d="M{x} 240v17M{x} 458v14" stroke="#888" stroke-width=".7"/>{/each}
									<path d="M1134.300 458v45M1347.300 458v45M1239.700 472v15M1242.700 472v15" stroke="#888" stroke-width=".7"/>
									{#each ticksC as x}<path d="M{x} 265v44" stroke="#999" stroke-width=".7"/>{/each}
									{#each topA as [t, x]}
										<text x={x} y="243.500" text-anchor="middle">{t}</text>
										<text x={x} y="465" text-anchor="middle">{t}</text>
									{/each}
									<text x="1241" y="266" text-anchor="middle">270</text>
									<text x="1215.700" y="281" text-anchor="middle">130</text><text x="1233.300" y="281" text-anchor="middle">10</text><text x="1266" y="281" text-anchor="middle">130</text>
									{#each topC as [t, x]}<text x={x} y="296" text-anchor="middle">{t}</text>{/each}
									<text x="1186.700" y="480" text-anchor="middle">290</text><text x="1233.300" y="480" text-anchor="middle">10</text><text x="1294.700" y="480" text-anchor="middle">290</text>
									<text x="1241" y="495" text-anchor="middle">590</text>

									<!-- vertical dimensions either side -->
									<path d="M1062.700 325v118M1059 328.300h15M1059 360h30M1059 407.300h30M1059 437.300h15M1077.700 356v55M1065.700 374.300h23M1065.700 392.300h23" stroke="#999" stroke-width=".7"/>
									<path d="M1418.600 325v118M1408 328.300h15M1393 360h30M1393 407.300h30M1408 437.300h15M1402 356v55M1393 374.300h15M1393 392.300h15" stroke="#999" stroke-width=".7"/>
									{#each rotL as [t, y]}
										<text transform="translate(1060 {y}) rotate(-90)" text-anchor="middle">{t}</text>
										<text transform="translate(1415 {y}) rotate(-90)" text-anchor="middle">{t}</text>
									{/each}
									{#each rotS as [t, y]}
										<text transform="translate(1075 {y}) rotate(-90)" text-anchor="middle">{t}</text>
										<text transform="translate(1400 {y}) rotate(-90)" text-anchor="middle">{t}</text>
									{/each}
									<text transform="translate(1107 383) rotate(-90)" text-anchor="middle" font-size="8.500">HEB 300 - S235</text>
									<text transform="translate(1384 383) rotate(-90)" text-anchor="middle" font-size="8.500">HEB 300 - S235</text>
								</svg>

								<div class="report">
									<div class="model">
										<span class="m1">Model</span><span class="m2">:</span><b class="m3">rigid fishplate joint</b>
										<span>Steel grade <b>S235</b></span>
									</div>

									<h4 class="h1">Number of screws</h4>
									<table>
										<colgroup>{#each t1cols as w}<col style:width="{w}px">{/each}</colgroup>
										<thead><tr class="h22"><th class="tl">Connection</th><th>Number</th><th>Size</th><th>Resistance</th><th>Screw type</th></tr></thead>
										<tbody>
											{#each t1rows as r, i}
												<tr class:first={i === 0} class:last={i === 2}>
													{#each r as c, j}<td class:tc={j > 0}>{c}</td>{/each}
												</tr>
											{/each}
											<tr class="total"><td>total</td><td class="tc"><b>32</b></td><td class="tc"><b>M12</b></td><td class="tc"><b>4.6</b></td><td class="tc">Black bolt</td></tr>
										</tbody>
									</table>

									<h4 class="h2">Cross-sections</h4>
									<table>
										<colgroup>{#each t2cols as w}<col style:width="{w}px">{/each}</colgroup>
										<thead>
											<tr class="h33">
												<th class="tl top">Member</th><th class="tl top">Name</th>
												<th class="tr">h<br>cm</th><th class="tr">b<sub>o</sub><br>cm</th><th class="tr">t<sub>o</sub><br>cm</th><th class="tr">t<sub>s</sub><br>cm</th><th class="tr">r<br>cm</th><th class="tr">b<sub>u</sub><br>cm</th><th class="tr">t<sub>u</sub><br>cm</th>
											</tr>
										</thead>
										<tbody>
											{#each t2rows as r, i}
												<tr class:first={i === 0} class:last={i === 1}>
													{#each r as c, j}<td class:tr={j > 1}>{c}</td>{/each}
												</tr>
											{/each}
										</tbody>
									</table>

									<h4 class="h3">Member position</h4>
									<table>
										<colgroup><col style:width="563px"><col style:width="103px"></colgroup>
										<thead><tr class="h33"><th class="tr">Height offset of member axes (positive downwards)<br>mm</th><th class="tr">Gap size<br>mm</th></tr></thead>
										<tbody><tr class="single"><td class="tr">0</td><td class="tr">10</td></tr></tbody>
									</table>

									<h4 class="h4">Straps</h4>
									<table>
										<colgroup>{#each t4cols as w}<col style:width="{w}px">{/each}</colgroup>
										<thead>
											<tr class="s1">
												<th class="tl" rowspan="4">Connection</th>
												<th colspan="3">Arrangement</th>
												<th colspan="3">Dimensions</th>
											</tr>
											<tr class="s2">
												<th class="tl top0" rowspan="3">Number</th>
												<th colspan="2">Joint length</th>
												<th class="nb">Length</th>
												<th colspan="2">Cross-section</th>
											</tr>
											<tr class="s3"><th class="tr nb nr">left</th><th class="tr nb">right</th><th class="tr nb">l</th><th class="tr nb">b</th><th class="tr nb">t</th></tr>
											<tr class="s4"><th class="tr nt nr">mm</th><th class="tr nt">mm</th><th class="tr nt">mm</th><th class="tr nt">mm</th><th class="tr nt">mm</th></tr>
										</thead>
										<tbody>
											{#each t4rows as r, i}
												<tr class:first={i === 0} class:last={i === 2}>
													{#each r as c, j}<td class:tr={j > 1}>{c}</td>{/each}
												</tr>
											{/each}
										</tbody>
									</table>
								</div>
							</div>
						</div>
						<div class="vscroll">
							<svg width="10" height="8" viewBox="0 0 10 8"><path d="M1 6l4-4 4 4" fill="none" stroke="#555" stroke-width="1.500"/></svg>
							<div class="thumb"></div>
							<svg width="10" height="8" viewBox="0 0 10 8"><path d="M1 2l4 4 4-4" fill="none" stroke="#555" stroke-width="1.500"/></svg>
						</div>
					</div>
					<div class="hscroll">
						<svg width="8" height="10" viewBox="0 0 8 10"><path d="M6 1 2 5l4 4" fill="none" stroke="#aaa" stroke-width="1.500"/></svg>
						<svg width="8" height="10" viewBox="0 0 8 10"><path d="M2 1l4 4-4 4" fill="none" stroke="#aaa" stroke-width="1.500"/></svg>
					</div>
				</div>
			</div>
			<div class="gapbar">
				<svg width="10" height="10" viewBox="0 0 10 10" fill="#aaa"><rect x="8" y="0" width="1.500" height="1.500"/><rect x="8" y="4" width="1.500" height="1.500"/><rect x="4" y="4" width="1.500" height="1.500"/><rect x="8" y="8" width="1.500" height="1.500"/><rect x="4" y="8" width="1.500" height="1.500"/><rect x="0" y="8" width="1.500" height="1.500"/></svg>
			</div>
			<div class="lcstrip">
				<div class="lctab">
					<svg width="15" height="13" viewBox="0 0 15 13"><rect x=".5" y=".5" width="14" height="12" fill="#f4f6fb" stroke="#8090b0"/><rect x="1" y="1" width="13" height="2.500" fill="#a5b6e0"/><path d="M1 6h13M1 9h13M5 3v9M9 3v9" stroke="#b0bcd8" stroke-width=".8"/></svg>
					<span>Load case combinations</span>
				</div>
				<svg class="lcx" width="10" height="10" viewBox="0 0 10 10"><path d="M1.500 1.500l7 7M8.500 1.500l-7 7" stroke="#222" stroke-width="1.600"/></svg>
			</div>
		</div>
	</main>

	<footer class="status"></footer>
</div>

<style>
	:global(body) {
		margin: 0;
		background: #fff;
	}

	.app {
		width: 1920px;
		height: 1080px;
		display: flex;
		flex-direction: column;
		overflow: hidden;
		font-family: Roboto, "Liberation Sans", sans-serif;
		font-size: 12px;
		color: #444;
	}

	.icon {
		display: block;
	}

	.titlebar {
		height: 34px;
		background: #2b579a;
		display: flex;
		align-items: center;
		position: relative;
		color: #fff;
		flex-shrink: 0;
	}

	.logo {
		width: 25px;
		height: 26px;
		margin-left: 6px;
		background: #2f6fb8;
		border: 1px solid #7fa6d6;
		font: 700 9px "Liberation Sans", sans-serif;
		text-align: center;
		line-height: 28px;
		position: relative;
		box-sizing: border-box;
	}

	.logo i {
		position: absolute;
		top: -9px;
		right: 1px;
		font-style: normal;
		font-size: 12px;
	}

	.quick {
		display: flex;
		align-items: center;
		margin-left: 12px;
		width: 210px;
		position: relative;
	}

	.w {
		position: absolute;
		left: 163px;
		top: 0;
		font: 500 16px Roboto, sans-serif;
		color: #b8c6e0;
	}

	.custom {
		position: absolute;
		left: 189px;
		top: 5px;
	}

	.title {
		position: absolute;
		left: 777px;
		font-size: 11.500px;
		white-space: nowrap;
		color: #f2f5fa;
	}

	.winctl {
		position: absolute;
		right: 16px;
		top: 10px;
		display: flex;
		gap: 31px;
	}

	.rtabs {
		height: 28px;
		background: #f2f1f0;
		position: relative;
		display: flex;
		flex-shrink: 0;
		font-size: 14px;
		line-height: 28px;
		color: #444;
	}

	.rtab {
		text-align: center;
	}

	.rtab.file {
		width: 61px;
	}

	.rtab.start {
		width: 67px;
		margin-left: 2px;
		font-weight: 700;
		letter-spacing: .4px;
		border-bottom: 3px solid #2b579a;
		height: 27px;
	}

	.rtab.help {
		margin-left: 18px;
	}

	.help-ic {
		position: absolute;
		right: 3px;
		top: 4px;
	}

	.ribbon {
		height: 99px;
		background: #f1f1f1;
		border-bottom: 2px solid #c8c8c8;
		display: flex;
		padding-top: 4px;
		box-sizing: border-box;
		position: relative;
		flex-shrink: 0;
	}

	.defs {
		position: absolute;
	}

	.group {
		height: 90px;
		border-right: 1px solid #bdbdbd;
		box-sizing: border-box;
		display: flex;
		flex-direction: column;
	}

	.g-input { width: 259px; }
	.g-actions { width: 76px; }
	.g-calc { width: 149px; }
	.g-graphic { width: 75px; }
	.g-vis { width: 131px; }
	.g-pres { width: 93px; }
	.g-out { width: 165px; }
	.g-frilo { width: 65px; }

	.gbody {
		height: 78px;
		display: flex;
	}

	.glabel {
		text-align: center;
		line-height: 16px;
		height: 12px;
		color: #555;
	}

	.glabel.off {
		color: #aaa;
	}

	.big {
		display: flex;
		flex-direction: column;
		align-items: center;
		line-height: 16px;
		white-space: nowrap;
		flex-shrink: 0;
	}

	.big.wide {
		width: 92px;
	}

	.big-ic {
		height: 39px;
		padding-top: 5px;
		box-sizing: border-box;
		display: flex;
		align-items: flex-start;
	}

	.col {
		flex-direction: column;
		padding-top: 14px;
		padding-left: 6px;
		box-sizing: border-box;
	}

	.srow {
		height: 24px;
		display: flex;
		align-items: center;
		gap: 4px;
	}

	.off {
		color: #b0b0b0;
	}

	.caret {
		display: inline-block;
		width: 0;
		height: 0;
		border-left: 3px solid transparent;
		border-right: 3px solid transparent;
		border-top: 3px solid #999;
		vertical-align: middle;
	}

	.srow .caret,
	.orow .caret {
		margin-left: 3px;
		border-top-color: #bbb;
	}

	.caret.dark {
		border-top-color: #333;
	}

	.caret.light {
		border-top-color: #bbb;
	}

	.gridg {
		display: grid;
		grid-template-columns: repeat(3, 22px);
		grid-auto-rows: 32px;
		padding: 6px 0 0 4px;
		box-sizing: border-box;
	}

	.cell {
		display: flex;
		align-items: center;
		justify-content: center;
	}

	.visgrid {
		display: grid;
		grid-template-columns: 22px 21px 22px;
		grid-auto-rows: 24px;
		padding-top: 2px;
		height: 74px;
		margin-left: -4px;
	}

	.vcell {
		display: flex;
		align-items: center;
		justify-content: center;
	}

	.vcell.on,
	.oa.on {
		background: #cfcfcf;
	}

	.outrows {
		padding-top: 2px;
		margin-left: -4px;
		letter-spacing: .1px;
	}

	.orow {
		height: 24px;
		display: flex;
		align-items: center;
	}

	.oa {
		width: 22px;
		height: 23px;
		display: flex;
		align-items: center;
		justify-content: center;
		margin-right: 3px;
	}

	.orow span {
		margin-left: 3px;
	}

	.collapse {
		position: absolute;
		right: 7px;
		top: 88px;
	}

	.main {
		flex: 1;
		display: flex;
		min-height: 0;
	}

	.left {
		width: 355px;
		background: #fff;
		display: flex;
		flex-direction: column;
		flex-shrink: 0;
		padding-top: 2px;
		box-sizing: border-box;
		font-size: 11px;
		letter-spacing: -.1px;
		color: #333;
	}

	.props {
		height: 20px;
		margin: 0 3px 0 2px;
		background: #eaf3fc;
		border: 1px solid #7ba6e0;
		border-radius: 2px;
		display: flex;
		align-items: center;
		justify-content: space-between;
		padding: 0 5px 0 4px;
		box-sizing: border-box;
		color: #222;
	}

	.ptree {
		height: 151px;
		position: relative;
		padding-top: 2px;
		box-sizing: border-box;
		flex-shrink: 0;
	}

	.plines {
		position: absolute;
		left: 0;
		top: 1px;
	}

	.pplus {
		position: absolute;
		left: 8px;
		top: 22px;
	}

	.pnode {
		height: 16px;
		line-height: 16px;
		margin-left: 21px;
		padding: 0 3px;
		width: max-content;
		position: relative;
	}

	.pnode.sel {
		background: #a4b8e0;
		color: #eef3fb;
		width: 35px;
	}

	.ptools {
		position: absolute;
		right: 4px;
		top: 8px;
		display: flex;
		gap: 3px;
	}

	.sect {
		background: #e3e3e3;
		height: 24px;
		display: flex;
		align-items: center;
		justify-content: space-between;
		padding: 0 4px;
		color: #5d5d72;
		font-size: 12px;
		flex-shrink: 0;
	}

	.sect.tall {
		height: 25px;
	}

	.prow {
		height: 21px;
		display: flex;
		border-bottom: 1px solid #d9d9d9;
		box-sizing: border-box;
		flex-shrink: 0;
		color: #222;
	}

	.pl {
		width: 170px;
		padding-left: 4px;
		line-height: 20px;
		border-right: 1px solid #d9d9d9;
		box-sizing: border-box;
	}

	.pv {
		flex: 1;
		display: flex;
		align-items: center;
		padding-left: 5px;
		position: relative;
	}

	.pv > span {
		flex: 1;
	}

	.grayt {
		color: #888;
	}

	.grayt > span {
		flex: none;
	}

	.scalebox {
		flex: 1;
		height: 13px;
		background: #eee;
		margin: 0 2px 0 6px;
	}

	.dd {
		width: 16px;
		height: 20px;
		background: #f0f0f0;
		margin-right: 1px;
		display: flex;
		align-items: center;
		justify-content: center;
	}

	.cb {
		width: 16px;
		display: flex;
		align-items: center;
		height: 13px;
	}

	.filler {
		height: 454px;
		background: #e3e3e3;
		flex-shrink: 0;
	}

	.right {
		flex: 1;
		background: #f0f0f0;
		display: flex;
		flex-direction: column;
		min-width: 0;
	}

	.dtabs {
		height: 23px;
		background: #b9cce4;
		display: flex;
		align-items: flex-end;
		padding-left: 3px;
		font-size: 11.500px;
		color: #333;
		flex-shrink: 0;
	}

	.dtab {
		height: 20px;
		line-height: 20px;
		width: 66px;
		text-align: center;
	}

	.dtab.act {
		background: #f3f7fc;
		border-radius: 4px 4px 0 0;
	}

	.toolrow {
		height: 26px;
		background: #f1f1f1;
		flex-shrink: 0;
	}

	.toolbar {
		width: 1002px;
		height: 26px;
		background: linear-gradient(#fdfdfd, #f5f5f5);
		border-right: 1px solid #ddd;
		display: flex;
		align-items: center;
		padding-left: 5px;
		box-sizing: border-box;
		font-size: 11.500px;
		letter-spacing: -.1px;
		color: #222;
	}

	.tool {
		height: 24px;
		flex-shrink: 0;
		display: flex;
		align-items: center;
		justify-content: center;
		box-sizing: border-box;
	}

	.tool.sel {
		border: 1px solid #0f7ad0;
		background: #e7f2fb;
	}

	.tool.sep::after {
		content: '';
		width: 1px;
		height: 22px;
		background: #bbb;
	}

	.tool.grip::after {
		content: '';
		width: 2px;
		height: 18px;
		background: repeating-linear-gradient(#aaa 0 2px, transparent 2px 4px);
	}

	.tool.txt {
		justify-content: flex-start;
		white-space: nowrap;
	}

	.tool.inp {
		background: #fff;
		justify-content: flex-start;
		padding-left: 3px;
	}

	.tool.box {
		background: #fff;
		border: 1px solid #555;
		justify-content: flex-start;
		padding-left: 3px;
		color: #1a7a1a;
	}

	.work {
		height: 799px;
		display: flex;
		border-bottom: 1px solid #d8d8d8;
		box-sizing: border-box;
		flex-shrink: 0;
	}

	.marks {
		width: 197px;
		padding-left: 3px;
		box-sizing: border-box;
		flex-shrink: 0;
	}

	.subtabs {
		height: 21px;
		display: flex;
		align-items: flex-end;
		padding-left: 2px;
		font-size: 11.500px;
		color: #333;
	}

	.stab {
		height: 18px;
		line-height: 18px;
		width: 40px;
		text-align: center;
		background: #ececec;
		border: 1px solid #ddd;
		border-bottom: 0;
	}

	.stab.act {
		height: 21px;
		width: 67px;
		background: #fff;
		line-height: 20px;
		font-size: 11px;
		letter-spacing: -.1px;
	}

	.mframe {
		width: 184px;
		height: 776px;
		background: #fff;
		border: 1px solid #d2d2d2;
		padding: 2px 2px;
		box-sizing: border-box;
	}

	.mtree {
		height: 100%;
		border: 1px solid #777;
		box-sizing: border-box;
		position: relative;
		font-size: 11px;
		letter-spacing: -.28px;
		color: #222;
	}

	.mlines {
		position: absolute;
		left: 0;
		top: -2px;
	}

	.mlines + .mrow {
		margin-top: -1px;
	}

	.mrow {
		height: 16px;
		display: flex;
		align-items: center;
		gap: 2px;
		padding-left: 24px;
		position: relative;
	}

	.mrow.l2 {
		padding-left: 43px;
	}

	.minus {
		position: absolute;
		left: 10px;
		top: 3px;
	}

	.docview {
		flex: 1;
		min-width: 0;
		display: flex;
		flex-direction: column;
	}

	.hruler {
		height: 22px;
		padding: 3px 0 0 288px;
		box-sizing: border-box;
	}

	.hruler svg {
		background: #fff;
		display: block;
	}

	.docrow {
		height: 760px;
		display: flex;
	}

	.vruler {
		width: 18px;
		flex-shrink: 0;
	}

	.vruler svg {
		background: #fff;
		display: block;
	}

	.viewer {
		flex: 1;
		background: #a0a0a0;
		overflow: hidden;
		display: flex;
		min-width: 0;
	}

	.page {
		width: 795px;
		height: 760px;
		box-sizing: border-box;
		background: #fff;
		border-left: 1px solid #111;
		border-right: 1px solid #111;
		box-shadow: 0 0 8px 1px #777;
		margin-left: 270px;
		position: relative;
		flex-shrink: 0;
		font-family: Lato, sans-serif;
		font-size: 12.500px;
		line-height: 13px;
		color: #222;
		overflow: hidden;
	}

	.stamp {
		position: absolute;
		left: 199px;
		top: 535px;
		transform-origin: 0 0;
		transform: rotate(-58deg);
		font: 500 225px/0 Roboto, sans-serif;
		color: #e3e3e3;
		white-space: nowrap;
	}

	.drawing {
		display: block;
		position: relative;
		background: #fff;
	}

	.report {
		padding-left: 63px;
		width: 666px;
		position: relative;
	}

	.model {
		height: 14px;
		margin-top: 19px;
		display: flex;
	}

	.m1 {
		width: 47px;
		letter-spacing: .3px;
	}

	.m2 {
		width: 11px;
	}

	.m3 {
		width: 150px;
	}

	h4 {
		margin: 0;
		font-size: 12.500px;
		font-weight: 700;
		height: 14px;
		line-height: 14px;
	}

	.h1 { margin: 10px 0 3px; }
	.h2 { margin: 11px 0 5px; }
	.h3 { margin: 10px 0 5px; }
	.h4 { margin: 11px 0 4px; }

	table {
		width: 666px;
		table-layout: fixed;
		border-collapse: collapse;
		background: transparent;
	}

	th,
	td {
		padding: 0 4px;
		border: 1px solid #a0a0a0;
		font-weight: 400;
		white-space: nowrap;
		line-height: 13px;
		letter-spacing: -.1px;
		box-sizing: border-box;
	}

	th {
		background: #99ccff;
		text-align: center;
		vertical-align: middle;
	}

	td {
		border-top: 0;
		border-bottom: 0;
	}

	.tl { text-align: left; }
	.tr { text-align: right; }
	.tc { text-align: center; }

	sub {
		font-size: 7px;
		line-height: 0;
		vertical-align: baseline;
		position: relative;
		top: 2px;
	}

	.h22 th {
		height: 22px;
		padding-top: 3px;
	}

	.h33 th {
		height: 32px;
		line-height: 13px;
		padding-top: 2px;
	}

	th.top,
	.h33 th.top {
		vertical-align: top;
		padding-top: 5px;
	}

	th.top0 {
		vertical-align: top;
	}

	tr.first td {
		padding-top: 5px;
	}

	tr.last td {
		padding-bottom: 2.500px;
		border-bottom: 1px solid #a0a0a0;
	}

	tr.total td {
		height: 18px;
		border-bottom: 1px solid #a0a0a0;
		border-top: 1px solid #a0a0a0;
	}

	tr.single td {
		height: 21px;
		padding-top: 3px;
		border-bottom: 1px solid #a0a0a0;
	}

	.s1 th {
		height: 19px;
		padding-top: 6px;
		vertical-align: top;
	}

	.s2 th {
		height: 13px;
		line-height: 12px;
	}

	.s3 th {
		height: 13px;
	}

	.s4 th {
		height: 14px;
	}

	th.nb { border-bottom: 0; }
	th.nt { border-top: 0; }
	th.nr { border-right: 0; }

	.vscroll {
		width: 17px;
		flex-shrink: 0;
		background: #f0f0f0;
		display: flex;
		flex-direction: column;
		align-items: center;
		padding-top: 5px;
		box-sizing: border-box;
		position: relative;
		justify-content: space-between;
		padding-bottom: 4px;
	}

	.thumb {
		position: absolute;
		top: 60px;
		left: 0;
		width: 17px;
		height: 97px;
		background: #cdcdcd;
	}

	.hscroll {
		height: 17px;
		display: flex;
		justify-content: space-between;
		align-items: center;
		padding: 0 20px 0 22px;
	}

	.gapbar {
		height: 25px;
		display: flex;
		justify-content: flex-end;
		align-items: flex-start;
		padding: 3px 1px 0 0;
		box-sizing: border-box;
		flex-shrink: 0;
	}

	.lcstrip {
		height: 24px;
		background: #b9cce4;
		margin-left: 3px;
		display: flex;
		align-items: flex-end;
		justify-content: space-between;
		padding: 0 6px 0 6px;
		flex-shrink: 0;
		border-bottom: 1px solid #bbb;
		box-sizing: border-box;
	}

	.lctab {
		width: 159px;
		height: 20px;
		background: #eef5fd;
		border-radius: 4px 4px 0 0;
		display: flex;
		align-items: center;
		gap: 8px;
		padding-left: 6px;
		box-sizing: border-box;
		font-size: 11px;
		color: #222;
	}

	.lcx {
		align-self: center;
	}

	.status {
		height: 22px;
		background: #f1f0ef;
		flex-shrink: 0;
	}
</style>
